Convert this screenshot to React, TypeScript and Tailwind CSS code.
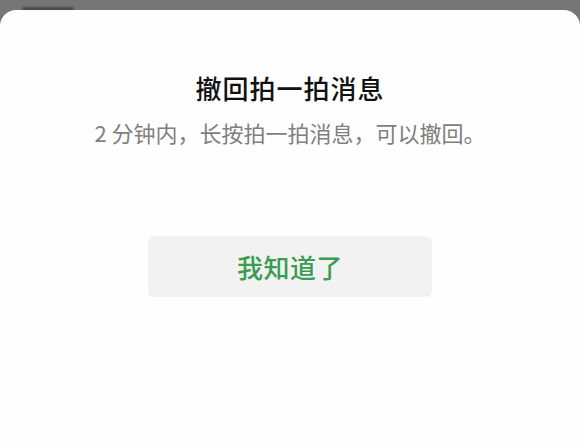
export default function App() {
  return (
    <div
      className="w-[580px] h-[446px] bg-[#767676] relative overflow-hidden"
      style={{ fontFamily: '"Noto Sans CJK SC", "Noto Sans", sans-serif' }}
    >
      {/* photo edge peeking behind the sheet */}
      <div className="absolute left-[22px] top-[7px] w-[52px] h-[5px] rounded-full bg-[#3e352f] opacity-70 blur-[1px]" />
      <div className="absolute inset-x-0 top-[10px] bottom-0 bg-[#fefefe] rounded-t-[16px] flex flex-col items-center">
        <h2 className="mt-[60px] text-[26px] leading-[35px] font-medium text-[#111] tracking-[1px]">
          撤回拍一拍消息
        </h2>
        <p className="mt-[12px] text-[22px] leading-[30px] text-[#7f7f7f]">
          <span className="mr-[5px]">2</span>分钟内，长按拍一拍消息，可以撤回。
        </p>
        <button className="mt-[89px] w-[284px] h-[61px] rounded-[6px] bg-[#f2f2f2] text-[26px] font-medium text-[#3c9c52] tracking-[0.5px]">
          我知道了
        </button>
      </div>
    </div>
  );
}
